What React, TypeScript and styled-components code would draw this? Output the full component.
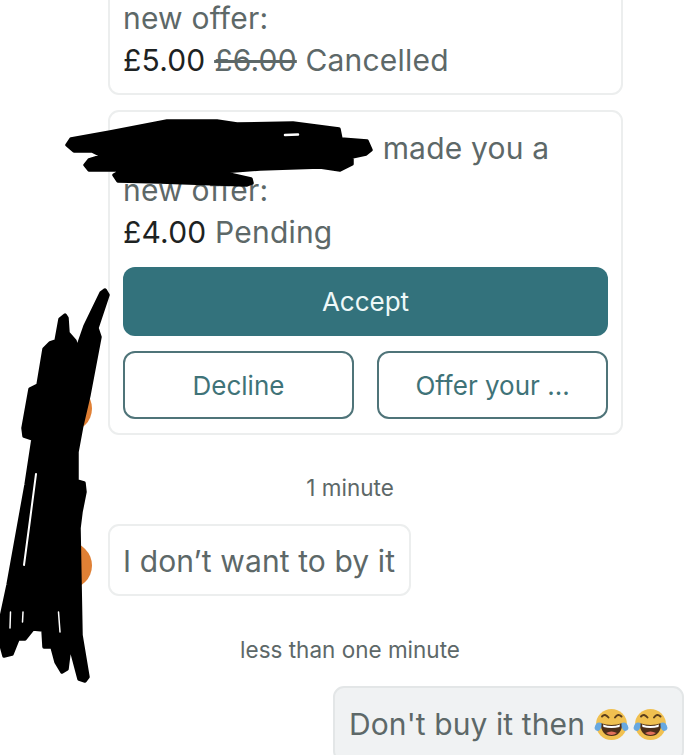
import React from "react";
import styled, { createGlobalStyle } from "styled-components";

const Global = createGlobalStyle`
  html, body { margin: 0; padding: 0; background: #fff; }
  body { font-family: Inter, "Noto Sans", "Liberation Sans", sans-serif; }
`;

const Page = styled.div`
  position: relative;
  width: 700px;
  height: 755px;
  overflow: hidden;
  background: #fff;
`;

const Thread = styled.div`
  display: flex;
  flex-direction: column;
  margin-top: -20px;
`;

const Row = styled.div<{ $gap?: number }>`
  display: flex;
  align-items: flex-end;
  gap: 16px;
  padding-left: 45px;
  margin-bottom: ${(p) => p.$gap ?? 0}px;
`;

const Avatar = styled.div<{ $empty?: boolean; $lift?: number }>`
  flex: none;
  width: 47px;
  height: 47px;
  margin-bottom: ${(p) => p.$lift ?? 7}px;
  border-radius: 50%;
  background: ${(p) => (p.$empty ? "transparent" : "#e08035")};
`;

const Card = styled.div`
  box-sizing: border-box;
  width: 515px;
  padding: 15px 13px 12px;
  background: #fff;
  border: 2px solid #eceeee;
  border-radius: 11px;
`;

const Line = styled.div`
  font-size: 30px;
  letter-spacing: 0.2px;
  line-height: 42px;
  color: #5d6868;
  white-space: nowrap;
`;

const RedactedName = styled.span`
  display: inline-block;
  width: 251px;
`;

const Price = styled.span`
  color: #1d2222;
`;

const Struck = styled.s`
  color: #5d6868;
`;

const Actions = styled.div`
  display: flex;
  flex-direction: column;
  gap: 15px;
  margin-top: 14px;
  margin-bottom: 2px;
`;

const PrimaryButton = styled.div`
  height: 69px;
  display: flex;
  align-items: center;
  justify-content: center;
  border-radius: 12px;
  background: #33727c;
  color: #eef8f8;
  font-size: 26px;
`;

const ButtonRow = styled.div`
  display: flex;
  gap: 23px;
`;

const OutlineButton = styled.div`
  box-sizing: border-box;
  flex: 1;
  height: 68px;
  display: flex;
  align-items: center;
  justify-content: center;
  border: 2px solid #4f7479;
  border-radius: 12px;
  color: #3f7378;
  font-size: 26px;
`;

const Time = styled.div<{ $top: number; $bottom: number }>`
  margin: ${(p) => p.$top}px 0 ${(p) => p.$bottom}px;
  text-align: center;
  font-size: 22.5px;
  line-height: 28px;
  color: #5d6868;
`;

const Bubble = styled.div`
  box-sizing: border-box;
  height: 72px;
  padding: 2px 14px 0 13px;
  display: flex;
  align-items: center;
  background: #fff;
  border: 2px solid #eceeee;
  border-radius: 11px;
  font-size: 30px;
  letter-spacing: 0.1px;
  color: #5d6868;
  white-space: nowrap;
`;

const OwnRow = styled.div`
  display: flex;
  justify-content: flex-end;
  padding-right: 16px;
`;

const OwnBubble = styled(Bubble)`
  background: #f0f2f3;
  border-color: #e3e6e7;
  height: 76px;
  gap: 5px;
  padding: 0 14px;
`;

const Emojis = styled.span`
  display: flex;
  gap: 4px;
  margin-left: 4px;
`;

const Redaction = styled.svg`
  position: absolute;
  left: 0;
  top: 0;
  width: 700px;
  height: 755px;
  pointer-events: none;
`;

function Laugh() {
  return (
    <svg width="35" height="33" viewBox="0 0 35 33">
      <circle cx="17.5" cy="16.5" r="15.5" fill="#f0c050" />
      <path d="M8 8.5 Q11 5 14.5 9.5 M21 9.5 Q24 5 27.5 8.5" fill="none" stroke="#5b3f1d" strokeWidth="2" strokeLinecap="round" />
      <path d="M6.5 15 Q17.5 19 28.5 15 Q27.5 28 17.5 28 Q7.5 28 6.5 15Z" fill="#4c2f1a" />
      <path d="M9 16.5 Q17.5 19.5 26 16.5 L25.5 19 Q17.5 21 9.5 19Z" fill="#fff" />
      <path d="M12 25 Q17.5 22 23 25 Q17.5 29 12 25Z" fill="#e2705a" />
      <path d="M0.5 20 Q2 13 7.5 15 Q8 21 4.5 23 Q1 23 0.5 20Z" fill="#67a8e0" />
      <path d="M34.5 20 Q33 13 27.5 15 Q27 21 30.5 23 Q34 23 34.5 20Z" fill="#67a8e0" />
    </svg>
  );
}

export default function App() {
  return (
    <Page>
      <Global />
      <Thread>
        <Row $gap={15}>
          <Avatar $empty />
          <Card>
            <Line>new offer:</Line>
            <Line>
              <Price>£5.00</Price> <Struck>£6.00</Struck> Cancelled
            </Line>
          </Card>
        </Row>
        <Row>
          <Avatar $lift={3} />
          <Card>
            <Line>
              <RedactedName /> made you a
            </Line>
            <Line>new offer:</Line>
            <Line>
              <Price>£4.00</Price> Pending
            </Line>
            <Actions>
              <PrimaryButton>Accept</PrimaryButton>
              <ButtonRow>
                <OutlineButton>Decline</OutlineButton>
                <OutlineButton>Offer your ...</OutlineButton>
              </ButtonRow>
            </Actions>
          </Card>
        </Row>
        <Time $top={39} $bottom={22}>1 minute</Time>
        <Row>
          <Avatar />
          <Bubble>I don’t want to by it</Bubble>
        </Row>
        <Time $top={40} $bottom={22}>less than one minute</Time>
        <OwnRow>
          <OwnBubble>
            Don't buy it then
            <Emojis>
              <Laugh />
              <Laugh />
            </Emojis>
          </OwnBubble>
        </OwnRow>
      </Thread>
      <Redaction viewBox="0 0 700 755">
        <path
          fill="#000"
          stroke="#000"
          strokeWidth="3.5"
          strokeLinejoin="round"
          d="M67 145 L71 139 L110 132 L167 121 L217 121 L237 124 L293 123 L339 129 L341 139 L367 141 L371 150 L366 154 L352 157 L352 164 L340 170 L320 167 L260 169 L220 172 L251 179 L252 183 L247 185 L160 182 L118 181 L114 175 L123 170 L89 170 L85 165 L89 160 L102 156 L92 151 L74 151 Z"
        />
        <path stroke="#fff" strokeWidth="2.5" strokeLinecap="round" d="M285 135 L298 134.5" />
        <path
          fill="#000"
          stroke="#000"
          strokeWidth="3.5"
          strokeLinejoin="round"
          d="M105 290 L108 295 L97 328 L100 337 L89 395 L82 425 L77 452 L77 481 L84 483 L85 492 L81 512 L79 528 L81 635 L88 677 L85 681 L79 679 L70 645 L67 669 L62 672 L56 662 L52 647 L44 647 L43 630 L33 629 L25 639 L18 639 L12 654 L4 656 L1 645 L1 618 L8 585 L26 485 L33 439 L24 436 L23 428 L30 389 L38 385 L44 349 L50 343 L56 341 L60 319 L65 315 L67 318 L68 333 L75 341 L77 349 L85 326 L101 293 Z"
        />
        <g fill="none" stroke="#fff" strokeLinecap="round">
          <path strokeWidth="2" d="M36 474 L30 520 L24 565" />
          <path strokeWidth="1.5" d="M10.5 612 L10 628" />
          <path strokeWidth="1.5" d="M23 612 L22.5 622" />
          <path strokeWidth="1.5" d="M58.5 612 L60 632" />
        </g>
      </Redaction>
    </Page>
  );
}
